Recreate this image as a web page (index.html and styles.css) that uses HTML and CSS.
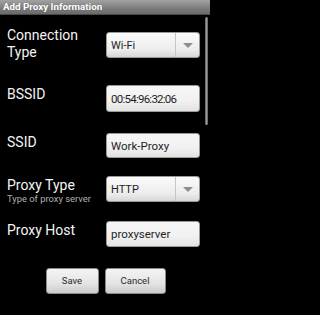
FILE: index.html
```html
<!DOCTYPE html>
<html>
<head>
<meta charset="utf-8">
<link rel="stylesheet" href="styles.css">
</head>
<body>
<div class="screen">
  <div class="title">Add Proxy Information</div>
  <div class="form">
    <div class="row r1">
      <div class="label two"><div class="line">Connection</div><div class="line">Type</div></div>
      <div class="field spinner"><span class="val">Wi-Fi</span><span class="drop"><span class="arrow"></span></span></div>
    </div>
    <div class="row r2">
      <div class="label">BSSID</div>
      <div class="field text"><span class="val mac">00:54:96:32:06</span></div>
    </div>
    <div class="row r3">
      <div class="label">SSID</div>
      <div class="field text"><span class="val">Work-Proxy</span></div>
    </div>
    <div class="row r4">
      <div class="label">Proxy Type<div class="sub">Type of proxy server</div></div>
      <div class="field spinner"><span class="val">HTTP</span><span class="drop"><span class="arrow"></span></span></div>
    </div>
    <div class="row r5">
      <div class="label">Proxy Host</div>
      <div class="field text"><span class="val">proxyserver</span></div>
    </div>
  </div>
  <div class="buttons">
    <div class="btn save">Save</div>
    <div class="btn cancel">Cancel</div>
  </div>
  <div class="scrollbar"></div>
</div>
</body>
</html>
```
FILE: styles.css
```css
html, body {
  margin: 0;
  padding: 0;
  background: #000;
}
.screen {
  position: relative;
  width: 210px;
  height: 315px;
  overflow: hidden;
  background: #000;
  font-family: Roboto, "Open Sans", sans-serif;
  color: #fff;
}
.title {
  height: 15px;
  box-sizing: border-box;
  padding-left: 3px;
  background: linear-gradient(#a2a2a2, #7c7c7c 60%, #6a6a6a);
  border-bottom: 1px solid #4a4a4a;
  font-size: 9.8px;
  line-height: 14px;
  font-weight: bold;
  color: #fff;
  text-shadow: 0 0 1px #555;
  white-space: nowrap;
}
.row {
  display: flex;
  align-items: flex-start;
  padding-left: 7px;
}
.label {
  width: 99px;
  margin-top: 1px;
  font-size: 14px;
  line-height: 16px;
  color: #f4f4f4;
  white-space: nowrap;
}
.label.two { margin-top: 0; }
.line {
  height: 16.5px;
  line-height: 16.5px;
}
.sub {
  font-size: 9.4px;
  line-height: 11.5px;
  color: #b0b0b0;
}
.r1 { margin-top: 12px; }
.r1 .field { margin-top: 5px; }
.r2 { margin-top: 25px; }
.r2 .field { height: 27px; }
.r3 { margin-top: 21px; }
.r3 .field { height: 25px; }
.r4 { margin-top: 18px; }
.r5 { margin-top: 16.5px; }
.field {
  width: 94px;
  height: 26px;
  box-sizing: border-box;
  border-radius: 3px;
  border: 1px solid #9a9a9a;
  background: linear-gradient(#fbfbfb, #ececec 70%, #d6d6d6);
  display: flex;
  align-items: center;
  color: #1e1e1e;
  font-size: 11.5px;
}
.field.text {
  background: linear-gradient(#f6f6f6, #f1f1f1 60%, #e2e2e2);
}
.val {
  flex: 1;
  padding-left: 4px;
  white-space: nowrap;
}
.val.mac { letter-spacing: -0.75px; }
.spinner .val { font-size: 11px; }
.drop {
  width: 24px;
  height: 100%;
  box-sizing: border-box;
  border-left: 1px solid #c6c6c6;
  display: flex;
  align-items: center;
  justify-content: center;
}
.arrow {
  width: 0;
  height: 0;
  border-left: 5px solid transparent;
  border-right: 5px solid transparent;
  border-top: 5px solid #8e8e8e;
  margin-left: 1px;
}
.buttons {
  display: flex;
  justify-content: center;
  gap: 6px;
  margin-top: 21px;
  padding-left: 1px;
}
.btn {
  height: 26px;
  box-sizing: border-box;
  border-radius: 3px;
  border: 1px solid #8a8a8a;
  background: linear-gradient(#f4f4f4, #e4e4e4 60%, #cbcbcb);
  color: #2a2a2a;
  font-size: 9.5px;
  line-height: 24px;
  text-align: center;
}
.save { width: 53px; }
.cancel { width: 61px; }
.scrollbar {
  position: absolute;
  left: 205px;
  top: 17px;
  width: 3px;
  height: 108px;
  border-radius: 2px;
  background: linear-gradient(90deg, #555, #9a9a9a 50%, #555);
}
```
